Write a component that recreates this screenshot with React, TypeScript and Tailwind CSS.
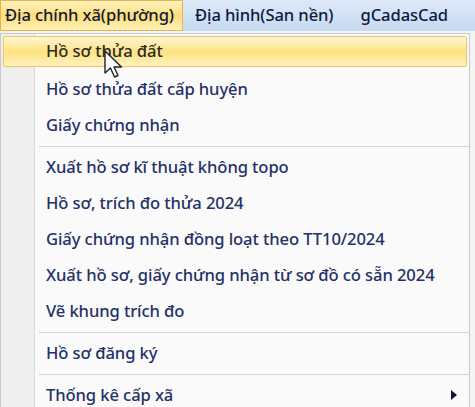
import React from "react";

type Entry = { label: string; sep?: false; active?: boolean; sub?: boolean } | { sep: true };

const entries: Entry[] = [
  { label: "Hồ sơ thửa đất", active: true },
  { label: "Hồ sơ thửa đất cấp huyện" },
  { label: "Giấy chứng nhận" },
  { sep: true },
  { label: "Xuất hồ sơ kĩ thuật không topo" },
  { label: "Hồ sơ, trích đo thửa 2024" },
  { label: "Giấy chứng nhận đồng loạt theo TT10/2024" },
  { label: "Xuất hồ sơ, giấy chứng nhận từ sơ đồ có sẵn 2024" },
  { label: "Vẽ khung trích đo" },
  { sep: true },
  { label: "Hồ sơ đăng ký" },
  { sep: true },
  { label: "Thống kê cấp xã", sub: true },
];

function Cursor() {
  return (
    <svg className="absolute left-[104px] top-[50px]" width="22" height="30" viewBox="0 0 22 30">
      <path d="M1 1 L1 23 L6.5 18 L10.5 27 L14 25.5 L10 17 L17.5 17 Z" fill="#fff" stroke="#222" strokeWidth="1.4" strokeLinejoin="round" />
    </svg>
  );
}

export default function App() {
  return (
    <div
      className="relative h-[407px] w-[475px] overflow-hidden bg-[#f4f4f4] text-[16.6px] font-medium tracking-[-0.1px]"
      style={{ fontFamily: '"Noto Sans", "Open Sans", sans-serif' }}
    >
      {/* menu bar */}
      <div className="flex h-[31px] items-center bg-gradient-to-b from-[#dde9f8] to-[#c6daf2] text-[#0e1a3c]">
        <div className="flex h-full w-[183px] items-center border border-[#e3b64a] bg-gradient-to-b from-[#fff3c4] via-[#ffdd73] to-[#fff0b8] pl-[4px]">
          Địa chính xã(phường)
        </div>
        <div className="pl-[12px]">Địa hình(San nền)</div>
        <div className="pl-[27px]">gCadasCad</div>
      </div>

      {/* dropdown */}
      <div className="mt-[2px] mr-[5px] border border-[#c9c9c9] bg-[#fafafa]">
        <div className="relative flex flex-col py-[1px]">
          <div className="absolute left-0 top-0 bottom-0 w-[34px] border-r border-[#d9d9d9] bg-[#efefef]" />
          <div className="absolute left-[35px] top-0 bottom-0 w-px bg-white" />
          {entries.map((e, i) =>
            e.sep ? (
              <div key={i} className="relative ml-[38px] flex h-[6px] items-center">
                <div className="h-px w-full bg-[#d4d4d4]" />
              </div>
            ) : (
              <div key={i} className="relative flex h-[36px] items-center">
                {e.active && (
                  <div className="absolute left-[2px] right-[2px] top-[1px] bottom-[4px] rounded-[2px] border border-[#e8c766] bg-gradient-to-b from-[#fff6d2] via-[#ffe283] to-[#fff1bc]" />
                )}
                <span className={"relative pl-[45px] " + (e.active ? "pb-[3px] text-[#2a2a2a]" : "text-[#243066]")}>{e.label}</span>
                {e.sub && (
                  <svg className="absolute right-[12px]" width="6" height="10" viewBox="0 0 6 10">
                    <path d="M0 0 L6 5 L0 10 Z" fill="#0d1540" />
                  </svg>
                )}
              </div>
            )
          )}
        </div>
      </div>
      <Cursor />
    </div>
  );
}
